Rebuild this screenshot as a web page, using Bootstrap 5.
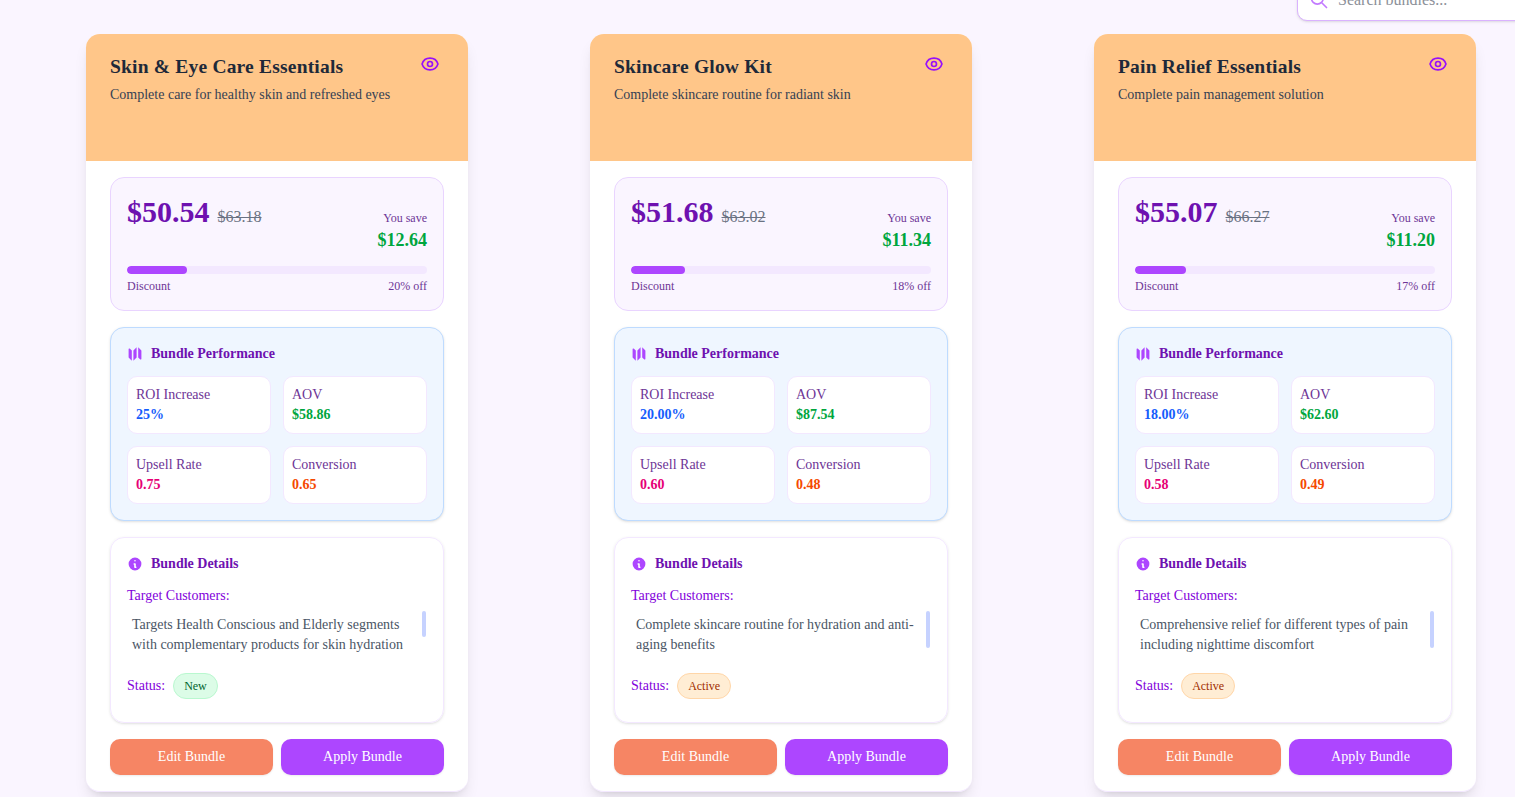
<!DOCTYPE html>
<html lang="en">
<head>
<meta charset="utf-8">
<meta name="viewport" content="width=device-width, initial-scale=1">
<title>Bundles</title>
<link rel="stylesheet" href="https://cdn.jsdelivr.net/npm/bootstrap@5.3.0/dist/css/bootstrap.min.css">
<style>
  body { background: #faf5ff; font-family: "Liberation Serif", serif; font-size: 14px; line-height: 20px; height: 797px; overflow: hidden; }
  .search-box { width: 256px; height: 42px; margin-top: -21px; margin-left: 1297px; border: 1px solid #dab2ff; border-radius: 10px; background: #fff; padding-left: 11px; box-shadow: 0 1px 3px rgba(0,0,0,.1), 0 1px 2px -1px rgba(0,0,0,.1); color: #c27aff; gap: 9px; }
  .search-box input { font-size: 16px; line-height: 24px; padding: 0; color: #364153; }
  .search-box input::placeholder { color: #8b8f98; opacity: 1; }
  .bundle-grid { display: grid; grid-template-columns: repeat(3, 382px); column-gap: 122px; margin: 13px 0 0 86px; }
  .bundle { border: 0; border-bottom: 1px solid #f3e8ff; border-radius: 14px; height: 758px; overflow: hidden; background: #fff; }
  .bundle-shell { border-radius: 14px; box-shadow: 0 10px 15px -3px rgba(0,0,0,.1), 0 4px 6px -4px rgba(0,0,0,.1); }
  .bundle-head { background: #ffc689; height: 127px; padding: 20px 28px 0 24px; }
  .bundle-head h2 { font-size: 19.5px; line-height: 25px; letter-spacing: .01em; font-weight: 700; color: #1e2939; margin: 0 0 6px; }
  .bundle-head p { color: #364153; margin: 0; }
  .eye { color: #9810fa; width: 20px; height: 20px; flex: none; }
  .bundle-body { padding: 16px 24px 16px; gap: 16px; }
  .panel { border: 1px solid #e9d4ff; border-radius: 14px; padding: 16px; }
  .panel-price { background: #faf5ff; height: 134px; }
  .panel-perf { background: #eff6ff; border-color: #bedbff; height: 194px; }
  .panel-info { border-color: #f3e8ff; height: 186px; }
  .panel-perf, .panel-info { box-shadow: 0 1px 3px rgba(0,0,0,.1), 0 1px 2px -1px rgba(0,0,0,.1); }
  .price { font-size: 30px; line-height: 36px; font-weight: 700; color: #6e11b0; }
  .price-old { font-size: 16px; color: #6a7282; text-decoration: line-through; }
  .fine { font-size: 12px; line-height: 16px; color: #6e3596; }
  .saving { font-size: 18px; line-height: 28px; font-weight: 700; color: #00a63e; }
  .meter { height: 8px; border-radius: 8px; background: #f3e8ff; margin-top: 12px; margin-bottom: 4px; }
  .meter .progress-bar { background: #ad46ff; border-radius: 8px; }
  .panel-title { font-size: 14px; line-height: 20px; font-weight: 700; color: #6e11b0; gap: 8px; margin: 0 0 12px; }
  .panel-title svg { width: 16px; height: 16px; color: #ad46ff; }
  .stats { display: grid; grid-template-columns: 1fr 1fr; gap: 12px; }
  .stat { background: #fff; border: 1px solid #f3e8ff; border-radius: 10px; padding: 8px; color: #6e3596; }
  .c-blue { color: #155dfc; } .c-green { color: #00a63e; } .c-pink { color: #e60076; } .c-orange { color: #f54900; }
  .lbl { color: #8200db; }
  .customers { height: 62px; margin-top: 5px; padding: 4px 1px 0 5px; color: #4a5565; }
  .customers p { width: 284px; margin: 0; }
  .thumb { width: 4px; margin-top: -4px; border-radius: 2px; background: #c6d2ff; flex: none; }
  .pill { font-size: 12px; line-height: 16px; height: 26px; padding: 4px 10px; border-radius: 13px; border: 1px solid; }
  .pill-new { background: #dcfce7; border-color: #b9f8cf; color: #016630; }
  .pill-active { background: #ffedd4; border-color: #ffd6a8; color: #9f2d00; }
  .act { height: 36px; border: 0; border-radius: 10px; padding: 0; font-size: 14px; line-height: 20px; font-weight: 500; color: #fff; box-shadow: 0 1px 2px rgba(0,0,0,.08); }
  .act:hover { color: #fff; }
  .act-edit, .act-edit:hover { background: #f68564; } .act-apply, .act-apply:hover { background: #ad46ff; }
</style>
</head>
<body>
<div class="search-box d-flex align-items-center">
  <svg width="20" height="20" viewBox="0 0 24 24" fill="none" stroke="currentColor" stroke-width="2" stroke-linecap="round" stroke-linejoin="round"><path d="M21 21l-6-6m2-5a7 7 0 11-14 0 7 7 0 0114 0z"/></svg>
  <input class="border-0 bg-transparent" type="text" placeholder="Search bundles...">
</div>
<main class="bundle-grid" id="bundles"></main>
<script src="https://cdn.jsdelivr.net/npm/bootstrap@5.3.0/dist/js/bootstrap.bundle.min.js"></script>
<script>
const bundles = [
  { name: 'Skin &amp; Eye Care Essentials', sub: 'Complete care for healthy skin and refreshed eyes', price: '50.54', old: '63.18', save: '12.64', off: 20, roi: '25%', aov: '58.86', up: '0.75', conv: '0.65', text: 'Targets Health Conscious and Elderly segments with complementary products for skin hydration', thumb: 26, status: 'New' },
  { name: 'Skincare Glow Kit', sub: 'Complete skincare routine for radiant skin', price: '51.68', old: '63.02', save: '11.34', off: 18, roi: '20.00%', aov: '87.54', up: '0.60', conv: '0.48', text: 'Complete skincare routine for hydration and anti-aging benefits', thumb: 37, status: 'Active' },
  { name: 'Pain Relief Essentials', sub: 'Complete pain management solution', price: '55.07', old: '66.27', save: '11.20', off: 17, roi: '18.00%', aov: '62.60', up: '0.58', conv: '0.49', text: 'Comprehensive relief for different types of pain including nighttime discomfort', thumb: 37, status: 'Active' }
];
const stat = (label, value, tone) => `<div class="stat"><div>${label}</div><div class="fw-bold ${tone}">${value}</div></div>`;
document.getElementById('bundles').innerHTML = bundles.map(b => `
<div class="bundle-shell"><article class="bundle card">
  <header class="bundle-head d-flex justify-content-between">
    <div><h2>${b.name}</h2><p>${b.sub}</p></div>
    <svg class="eye" viewBox="0 0 24 24" fill="none" stroke="currentColor" stroke-width="2" stroke-linecap="round" stroke-linejoin="round"><path d="M15 12a3 3 0 11-6 0 3 3 0 016 0z"/><path d="M2.458 12C3.732 7.943 7.523 5 12 5c4.478 0 8.268 2.943 9.542 7-1.274 4.057-5.064 7-9.542 7-4.477 0-8.268-2.943-9.542-7z"/></svg>
  </header>
  <div class="bundle-body d-flex flex-column">
    <section class="panel panel-price">
      <div class="d-flex justify-content-between align-items-baseline">
        <div class="d-flex align-items-baseline gap-2"><span class="price">$${b.price}</span><span class="price-old">$${b.old}</span></div>
        <div class="text-end"><div class="fine">You save</div><div class="saving">$${b.save}</div></div>
      </div>
      <div class="progress meter"><div class="progress-bar" style="width:${b.off}%"></div></div>
      <div class="fine d-flex justify-content-between"><span>Discount</span><span>${b.off}% off</span></div>
    </section>
    <section class="panel panel-perf">
      <h3 class="panel-title d-flex align-items-center"><svg viewBox="0 0 20 20" fill="currentColor"><path d="M12 1.586l-4 4v12.828l4-4V1.586zM3.707 3.293A1 1 0 002 4v10a1 1 0 00.293.707L6 18.414V5.586L3.707 3.293zM17.707 5.293L14 1.586v12.828l2.293 2.293A1 1 0 0018 16V6a1 1 0 00-.293-.707z"/></svg>Bundle Performance</h3>
      <div class="stats">
        ${stat('ROI Increase', b.roi, 'c-blue')}${stat('AOV', '$' + b.aov, 'c-green')}
        ${stat('Upsell Rate', b.up, 'c-pink')}${stat('Conversion', b.conv, 'c-orange')}
      </div>
    </section>
    <section class="panel panel-info">
      <h3 class="panel-title d-flex align-items-center"><svg viewBox="0 0 20 20" fill="currentColor"><path fill-rule="evenodd" clip-rule="evenodd" d="M18 10a8 8 0 11-16 0 8 8 0 0116 0zm-7-4a1 1 0 11-2 0 1 1 0 012 0zM9 9a1 1 0 000 2v3a1 1 0 001 1h1a1 1 0 100-2v-3a1 1 0 00-1-1H9z"/></svg>Bundle Details</h3>
      <div class="lbl">Target Customers:</div>
      <div class="customers d-flex justify-content-between"><p>${b.text}</p><div class="thumb" style="height:${b.thumb}px"></div></div>
      <div class="d-flex align-items-center gap-2"><span class="lbl">Status:</span><span class="pill pill-${b.status.toLowerCase()}">${b.status}</span></div>
    </section>
    <div class="d-flex gap-2"><button class="btn act act-edit flex-fill w-50">Edit Bundle</button><button class="btn act act-apply flex-fill w-50">Apply Bundle</button></div>
  </div>
</article></div>`).join('');
</script>
</body>
</html>
